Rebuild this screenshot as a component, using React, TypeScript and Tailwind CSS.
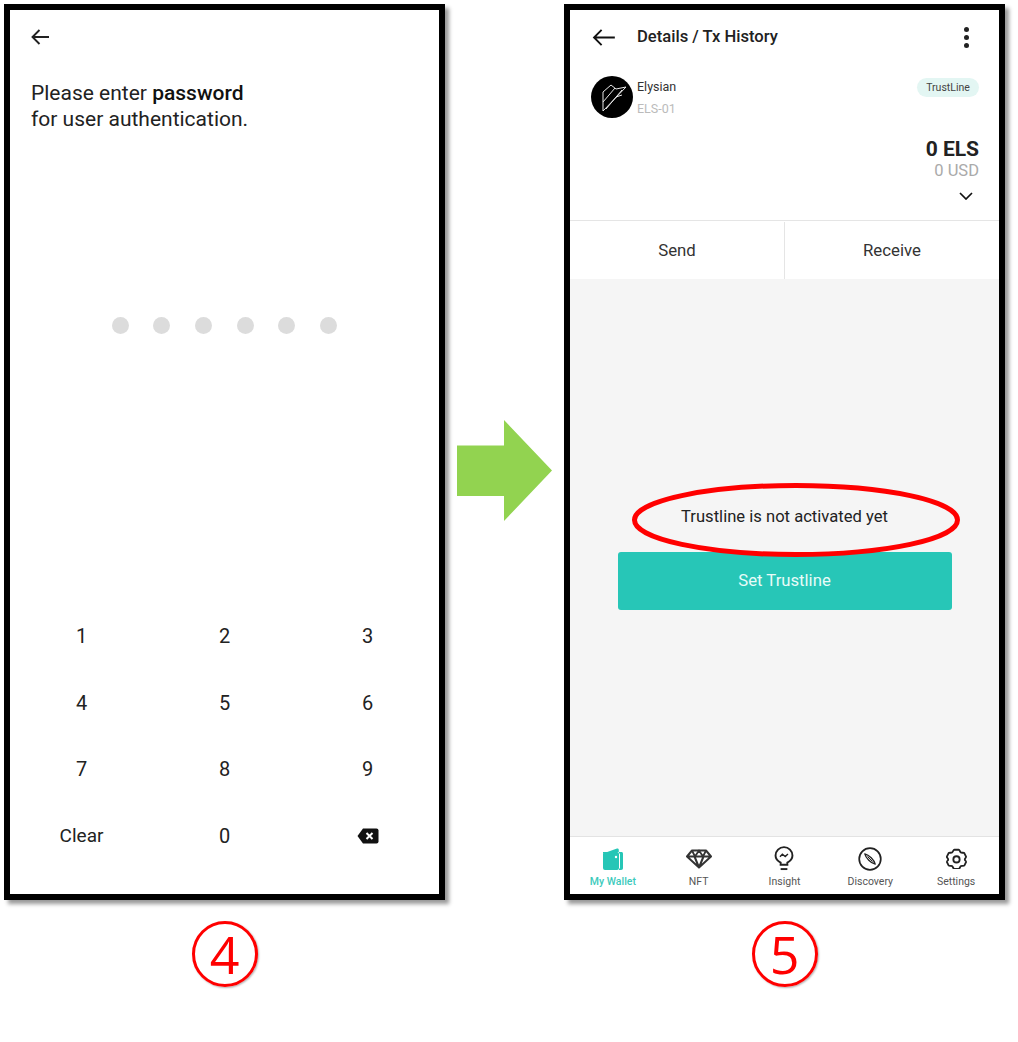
const keys = ['1', '2', '3', '4', '5', '6', '7', '8', '9', 'Clear', '0']

function BackArrow({ className }: { className: string }) {
  return (
    <svg viewBox="0 0 24 18" className={className} fill="none" stroke="currentColor" strokeWidth="2">
      <path d="M24 9H2M10 1L2 9l8 8" />
    </svg>
  )
}

function PasswordPhone() {
  return (
    <div className="flex h-[896px] w-[441px] flex-col border-[6px] border-black bg-white shadow-[4px_4px_4px_rgba(0,0,0,0.4)]">
      <div className="pl-[21px] pt-[19px] text-[#222]">
        <svg viewBox="0 0 18 16" className="h-[16px] w-[18px]" fill="none" stroke="currentColor" strokeWidth="1.9">
          <path d="M18 8H1.5M8.5 1L1.5 8l7 7" />
        </svg>
      </div>
      <p className="mt-[36px] pl-[21px] text-[21px] leading-[25.5px] text-[#222]">
        Please enter <span className="font-medium text-[#111]">password</span>
        <br />
        for user authentication.
      </p>
      <div className="mt-[185px] flex gap-[24.7px] pl-[101.5px]">
        {[0, 1, 2, 3, 4, 5].map((dot) => (
          <span key={dot} className="h-[17px] w-[17px] rounded-full bg-[#dcdcdc]" />
        ))}
      </div>
      <div className="mt-[268.6px] grid grid-cols-3 text-[20px] text-[#222]">
        {keys.map((key) => (
          <div key={key} className={`flex h-[66.7px] items-center justify-center ${key === 'Clear' ? 'text-[19px]' : ''}`}>
            {key}
          </div>
        ))}
        <div className="flex h-[66.7px] items-center justify-center">
          <svg viewBox="0 0 22 16" className="h-[16px] w-[22px]">
            <path d="M6 0.5H19.5a2 2 0 0 1 2 2v11a2 2 0 0 1-2 2H6L0.5 8z" fill="#111" />
            <path d="M9.5 5l6 6M15.5 5l-6 6" stroke="#fff" strokeWidth="2" fill="none" />
          </svg>
        </div>
      </div>
    </div>
  )
}

function WalletIcon() {
  return (
    <svg viewBox="0 0 24 24" className="h-[24px] w-[24px]">
      <path d="M2 6.500 16 1.500c1-.3 1.800.3 1.800 1.400V5H2z" fill="#26c6b6" />
      <rect x="2" y="5" width="16" height="18" rx="2" fill="#26c6b6" />
      <path d="M18 5h2.500c.9 0 1.500.6 1.500 1.500V21c0 1-.7 2-2 2h-2z" fill="#26c6b6" />
      <path d="M18.500 6.500v15" stroke="#fff" strokeWidth="1" />
      <circle cx="15" cy="10" r="1.200" fill="#fff" />
    </svg>
  )
}

function DiamondIcon() {
  return (
    <svg viewBox="0 0 26 20" className="h-[20px] w-[26px]" fill="none" stroke="#333" strokeWidth="2" strokeLinejoin="round">
      <path d="M6 1.500h14l5 6-12 11L1 7.500zM1 7.500h24M8.500 7.500l4.500 11 4.500-11" />
      <path d="M6 1.500l3 6 4-6 4 6 3-6" strokeWidth="1.800" />
    </svg>
  )
}

function BulbIcon() {
  return (
    <svg viewBox="0 0 20 26" className="h-[25px] w-[20px]" fill="none" stroke="#222" strokeWidth="2">
      <path d="M6.500 19.500v-2.200C3.500 15.800 1.200 13.200 1.200 10a8.800 8.800 0 0 1 17.600 0c0 3.200-2.300 5.800-5.300 7.300v2.200z" />
      <path d="M6.500 24h7" />
      <path d="M5.800 11.200 8.300 8.600l3 2.400 2.800-2.600" strokeWidth="1.500" />
    </svg>
  )
}

function CompassIcon() {
  return (
    <svg viewBox="0 0 24 24" className="h-[24px] w-[24px]" fill="none" stroke="#222" strokeWidth="1.700">
      <circle cx="12" cy="12" r="10.800" />
      <path d="M6.800 6.800C11 7.800 16.200 13 17.200 17.200 13 16.200 7.800 11 6.800 6.800z" strokeWidth="1.300" strokeLinejoin="round" />
      <path d="M9.500 9.500 14.500 14.500" strokeWidth="1" />
    </svg>
  )
}

function GearIcon() {
  return (
    <svg viewBox="0 0 24 24" className="h-[21px] w-[21px]" fill="none" stroke="#222" strokeWidth="2.100" strokeLinejoin="round">
      <path d="M9.500 2h5c1 0 1.600 2.500 2.500 3.200 1 .6 3.300-.2 3.900.6l2 4c.4 1-1.400 2-1.400 3.200s1.800 2.200 1.400 3.200l-2 3.900c-.6.900-2.900 0-3.900.6-.9.700-1.500 3.300-2.500 3.300h-5c-1 0-1.600-2.600-2.500-3.300-1-.6-3.300.3-3.900-.6l-2-3.900c-.4-1 1.400-2 1.400-3.200S.6 10.800 1 9.800l2-4c.6-.8 2.900 0 3.900-.6C7.900 4.500 8.500 2 9.500 2z" />
      <circle cx="12" cy="13" r="3.600" />
    </svg>
  )
}

const tabs = [
  { label: 'My Wallet', icon: <WalletIcon /> },
  { label: 'NFT', icon: <DiamondIcon /> },
  { label: 'Insight', icon: <BulbIcon /> },
  { label: 'Discovery', icon: <CompassIcon /> },
  { label: 'Settings', icon: <GearIcon /> },
]

function DetailsPhone() {
  return (
    <div className="relative flex h-[896px] w-[441px] flex-col border-[6px] border-black bg-white shadow-[4px_4px_4px_rgba(0,0,0,0.4)]">
      <div className="mb-[12px] flex h-[54px] items-center pl-[22px] pr-[30px]">
        <BackArrow className="h-[17px] w-[23px] text-[#111]" />
        <span className="ml-[22px] flex-1 text-[16.6px] font-medium text-[#222]">Details / Tx History</span>
        <span className="flex flex-col gap-[3px]">
          <span className="h-[5px] w-[5px] rounded-full bg-[#222]" />
          <span className="h-[5px] w-[5px] rounded-full bg-[#222]" />
          <span className="h-[5px] w-[5px] rounded-full bg-[#222]" />
        </span>
      </div>
      <div className="flex items-start pl-[21px] pr-[20px]">
        <svg viewBox="0 0 42 42" className="h-[42px] w-[42px]" fill="none">
          <circle cx="21" cy="21" r="21" fill="#000" />
          <g stroke="#e8e8e8" strokeWidth="1">
            <path d="M20 9 12 16 12 35 35 11 25 13 20 9zM12 26 24 12M15 33 31 14M25 21 31 19" />
          </g>
        </svg>
        <div className="ml-[4px] flex-1 pt-[3px]">
          <div className="text-[12.5px] leading-[16px] text-[#333]">Elysian</div>
          <div className="mt-[6px] text-[12.5px] leading-[16px] text-[#bbb]">ELS-01</div>
        </div>
        <span className="mt-[2px] flex h-[19px] w-[62px] items-center justify-center rounded-full bg-[#e3f6f3] text-[10.5px] text-[#444]">
          TrustLine
        </span>
      </div>
      <div className="flex flex-col items-end pr-[20px] pt-[19px]">
        <div className="text-[21px] font-bold leading-[24px] text-[#222]">0 ELS</div>
        <div className="text-[16.5px] leading-[20px] text-[#aaa]">0 USD</div>
        <svg viewBox="0 0 14 8" className="mr-[6px] mt-[11px] h-[8px] w-[14px]" fill="none" stroke="#111" strokeWidth="1.700">
          <path d="M1 1l6 6 6-6" />
        </svg>
      </div>
      <div className="mt-[20px] flex h-[59px] border-t border-[#e5e5e5] pt-[1px] text-[16.8px] text-[#333]">
        <div className="flex flex-1 items-center justify-center border-r border-[#e5e5e5]">Send</div>
        <div className="flex flex-1 items-center justify-center">Receive</div>
      </div>
      <div className="flex flex-1 flex-col items-center bg-[#f5f5f5] pt-[228px]">
        <div className="text-[16.6px] leading-[20px] text-[#222]">Trustline is not activated yet</div>
        <div className="mt-[25px] flex h-[58px] w-[334px] items-center justify-center rounded-[3px] bg-[#27c6b7] text-[16.7px] text-[#e8fbf8]">
          Set Trustline
        </div>
      </div>
      <div className="grid h-[58px] grid-cols-5 border-t border-[#e3e3e3] bg-white">
        {tabs.map((tab) => (
          <div key={tab.label} className="flex flex-col items-center">
            <div className="flex h-[35px] items-center justify-center pt-[8px]">{tab.icon}</div>
            <div className={`mt-[3px] text-[10.5px] leading-[14px] ${tab.label === 'My Wallet' ? 'font-medium text-[#3ccabc]' : 'text-[#555]'}`}>
              {tab.label}
            </div>
          </div>
        ))}
      </div>
      {/* red marker drawn over the screenshot */}
      <svg viewBox="0 0 330 74" className="absolute left-[61px] top-[473px] h-[74px] w-[330px]" fill="none">
        <ellipse cx="165" cy="37" rx="161.500" ry="34.500" stroke="#ff0000" strokeWidth="5" />
      </svg>
    </div>
  )
}

function StepBadge({ value }: { value: string }) {
  return (
    <div className="mx-auto mt-[21px] flex h-[66px] w-[66px] items-center justify-center rounded-full border-[3px] border-[#ff0000] text-[52px] font-medium leading-none text-[#ff0000] shadow-[1px_1px_2px_rgba(0,0,0,0.3)] [font-family:'Open_Sans',sans-serif]">
      {value}
    </div>
  )
}

export default function App() {
  return (
    <div className="flex h-[1042px] w-[1018px] items-start overflow-hidden bg-white pl-[4px] pt-[4px] [font-family:Roboto,sans-serif]">
      <div className="w-[441px]">
        <PasswordPhone />
        <StepBadge value="4" />
      </div>
      <div className="w-[119px] pl-[12px] pt-[416px]">
        <svg viewBox="0 0 95 101" className="h-[101px] w-[95px]">
          <path d="M0 25.500H47V0L95 50.500 47 101V76H0z" fill="#92d350" />
        </svg>
      </div>
      <div className="w-[441px]">
        <DetailsPhone />
        <StepBadge value="5" />
      </div>
    </div>
  )
}
